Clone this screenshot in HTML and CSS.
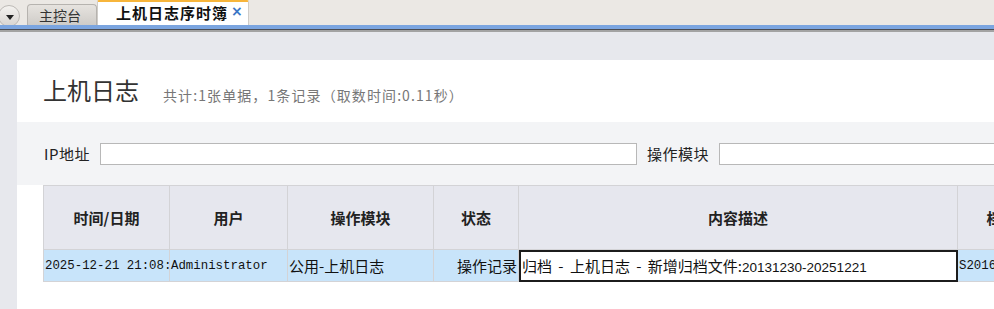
FILE: index.html
```html
<!DOCTYPE html>
<html lang="zh-CN">
<head>
  <meta charset="UTF-8">
  <title>上机日志序时簿</title>
  <link rel="stylesheet" href="styles.css">
</head>
<body>
  <div class="tabbar">
    <div class="menu-btn"><span class="arrow"></span></div>
    <div class="tab">主控台</div>
    <div class="tab active">上机日志序时簿<span class="close">×</span></div>
  </div>
  <div class="tabline"></div>

  <div class="page">
    <div class="panel">
      <div class="panel-head">
        <h1 class="title">上机日志</h1>
        <span class="summary">共计:1张单据，1条记录（取数时间:0.11秒）</span>
      </div>

      <div class="filter">
        <label class="filter-label">IP地址</label>
        <input class="filter-input ip" type="text">
        <label class="filter-label">操作模块</label>
        <input class="filter-input module" type="text">
      </div>

      <table class="grid">
        <colgroup>
          <col style="width:126px">
          <col style="width:118px">
          <col style="width:146px">
          <col style="width:85px">
          <col style="width:439px">
          <col style="width:118px">
        </colgroup>
        <thead>
          <tr>
            <th>时间/日期</th>
            <th>用户</th>
            <th>操作模块</th>
            <th>状态</th>
            <th>内容描述</th>
            <th>档案编号</th>
          </tr>
        </thead>
        <tbody>
          <tr class="selected">
            <td class="mono">2025-12-21 21:08:</td>
            <td class="mono">Administrator</td>
            <td>公用-上机日志</td>
            <td class="right">操作记录</td>
            <td class="editing">归档 - 上机日志 - 新增归档文件:<span class="num">20131230-20251221</span></td>
            <td class="mono">S2016</td>
          </tr>
        </tbody>
      </table>
    </div>
  </div>
</body>
</html>
```

FILE: styles.css
```css
body {
  margin: 0;
  font-family: "Noto Sans CJK SC", "Liberation Sans", sans-serif;
  color: #222;
  background: #e7e8ed;
  height: 309px;
  overflow: hidden;
}
.tabbar {
  display: flex;
  align-items: flex-end;
  height: 25px;
  background: #ebe8e4;
  overflow: hidden;
}
.menu-btn {
  align-self: flex-start;
  margin: 5px 0 0 -2px;
  width: 22px;
  height: 22px;
  border-radius: 50%;
  border: 1px solid #bdbab6;
  background: linear-gradient(#f4f2ef, #d8d5d1);
  box-sizing: border-box;
  position: relative;
}
.arrow {
  position: absolute;
  left: 7px;
  top: 9px;
  border-left: 4px solid transparent;
  border-right: 4px solid transparent;
  border-top: 5px solid #222;
}
.tab {
  height: 21px;
  margin-left: 7px;
  width: 70px;
  box-sizing: border-box;
  border: 1px solid #b6b3af;
  border-bottom: none;
  border-radius: 4px 4px 0 0;
  background: linear-gradient(#e6e3df, #cfccc8);
  font-size: 14px;
  line-height: 20px;
  padding-left: 11px;
  color: #333;
}
.tab.active {
  margin-left: 0;
  width: 152px;
  height: 25px;
  border: 1px solid #cfccc8;
  border-top: 2px solid #f7b53b;
  border-bottom: none;
  border-radius: 2px 2px 0 0;
  background: #fff;
  font-size: 15px;
  font-weight: bold;
  letter-spacing: 1px;
  line-height: 21px;
  padding-left: 18px;
  color: #111;
}
.close {
  color: #3b77c6;
  font-family: "DejaVu Sans", sans-serif;
  font-size: 14px;
  margin-left: 3px;
  position: relative;
  top: -3px;
}
.tabline {
  height: 4px;
  background: #7ba5e0;
  border-bottom: 1px solid #4a4d55;
  box-shadow: 0 2px 0 #a3a3a3;
}
.page {
  padding: 30px 0 0 17px;
}
.panel {
  background: #fff;
  height: 249px;
  overflow: hidden;
}
.panel-head {
  height: 62px;
  display: flex;
  align-items: baseline;
  padding-left: 26px;
}
.title {
  margin: 0;
  font-size: 24px;
  font-weight: normal;
  color: #333;
  line-height: 62px;
  position: relative;
  top: -1px;
}
.summary {
  margin-left: 24px;
  font-size: 14px;
  letter-spacing: 1.1px;
  color: #777;
}
.filter {
  height: 63px;
  background: #f3f4f6;
  display: flex;
  align-items: center;
  padding-left: 27px;
}
.filter-label {
  font-size: 15px;
  letter-spacing: 0.5px;
  color: #222;
  margin-right: 10px;
  white-space: nowrap;
  flex-shrink: 0;
}
.filter-input {
  height: 22px;
  box-sizing: border-box;
  border: 1px solid #b8b8b8;
  background: #fff;
  margin: 0;
  padding: 0 4px;
  flex-shrink: 0;
}
.filter-input.ip {
  width: 537px;
  margin-right: 10px;
}
.filter-input.module {
  width: 300px;
}
.grid {
  margin-left: 26px;
  border-collapse: collapse;
  table-layout: fixed;
  width: 1032px;
}
.grid th,
.grid td {
  border: 1px solid #d3d3d6;
  white-space: nowrap;
  overflow: hidden;
  padding: 0 1px;
}
.grid th {
  height: 63px;
  background: #e6e7ee;
  font-size: 15px;
  font-weight: bold;
  color: #222;
}
.grid td {
  height: 31px;
  font-size: 15px;
  color: #111;
}
.selected td {
  background: #c8e4fa;
}
.grid td.mono {
  font-family: "Liberation Mono", monospace;
  font-size: 12.4px;
}
.grid td.right {
  text-align: right;
}
.grid td.editing {
  background: #fff;
  outline: 2px solid #1c1c1c;
  outline-offset: -2px;
  padding-left: 3px;
  word-spacing: 3px;
}
.num {
  font-family: "Liberation Sans", sans-serif;
  font-size: 13.5px;
  word-spacing: 0;
}
```
